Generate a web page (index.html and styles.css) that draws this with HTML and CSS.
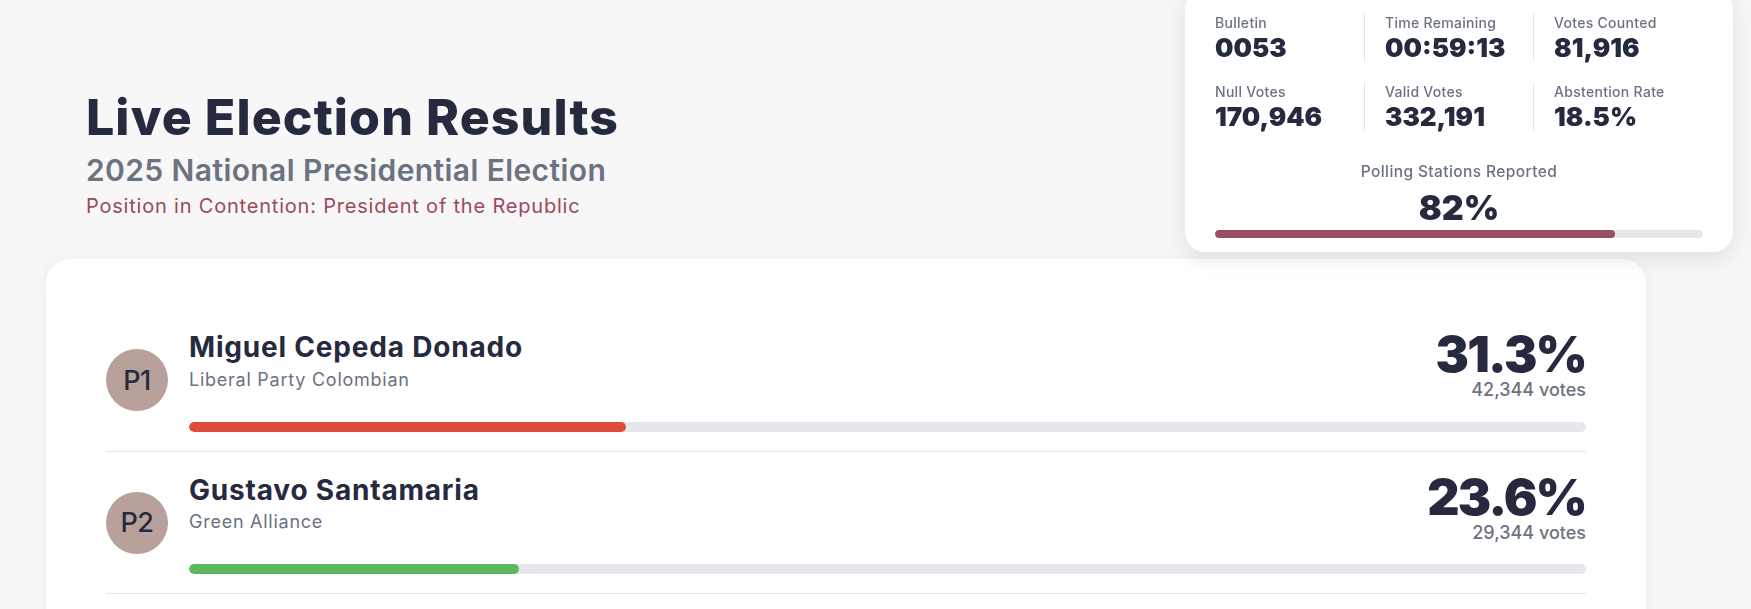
FILE: index.html
```html
<!DOCTYPE html>
<html lang="en">
<head>
<meta charset="utf-8">
<title>Live Election Results</title>
<link rel="stylesheet" href="styles.css">
</head>
<body>
<header class="page-header">
  <h1 class="title">Live Election Results</h1>
  <h2 class="subtitle">2025 National Presidential Election</h2>
  <p class="position">Position in Contention: President of the Republic</p>
</header>

<aside class="stats-card">
  <div class="stats-grid">
    <div class="stat"><div class="stat-label">Bulletin</div><div class="stat-value">0053</div></div>
    <div class="stat stat-sep"><div class="stat-label">Time Remaining</div><div class="stat-value">00:59:13</div></div>
    <div class="stat stat-sep"><div class="stat-label">Votes Counted</div><div class="stat-value">81,916</div></div>
    <div class="stat"><div class="stat-label">Null Votes</div><div class="stat-value">170,946</div></div>
    <div class="stat stat-sep"><div class="stat-label">Valid Votes</div><div class="stat-value">332,191</div></div>
    <div class="stat stat-sep"><div class="stat-label">Abstention Rate</div><div class="stat-value">18.5%</div></div>
  </div>
  <div class="polling">
    <div class="polling-label">Polling Stations Reported</div>
    <div class="polling-value">82%</div>
    <div class="track track-thin"><div class="fill fill-maroon" style="width:82%"></div></div>
  </div>
</aside>

<main class="results-card">
  <div class="candidate">
    <div class="avatar">P1</div>
    <div class="candidate-body">
      <div class="candidate-top">
        <div class="candidate-info">
          <div class="candidate-name">Miguel Cepeda Donado</div>
          <div class="candidate-party">Liberal Party Colombian</div>
        </div>
        <div class="candidate-result">
          <div class="candidate-pct">31.3%</div>
          <div class="candidate-votes">42,344 votes</div>
        </div>
      </div>
      <div class="track"><div class="fill fill-red" style="width:31.3%"></div></div>
    </div>
  </div>
  <div class="candidate">
    <div class="avatar">P2</div>
    <div class="candidate-body">
      <div class="candidate-top">
        <div class="candidate-info">
          <div class="candidate-name">Gustavo Santamaria</div>
          <div class="candidate-party">Green Alliance</div>
        </div>
        <div class="candidate-result">
          <div class="candidate-pct">23.6%</div>
          <div class="candidate-votes">29,344 votes</div>
        </div>
      </div>
      <div class="track"><div class="fill fill-green" style="width:23.6%"></div></div>
    </div>
  </div>
</main>
</body>
</html>
```

FILE: styles.css
```css
* { box-sizing: border-box; }

html, body {
  margin: 0;
  padding: 0;
  background: #f7f7f7;
  font-family: "Inter", "Noto Sans", sans-serif;
  color: #252a3f;
  overflow: hidden;
}

body {
  height: 609px;
}

.page-header {
  padding: 87px 0 0 86px;
  height: 259px;
}

.title {
  margin: 0;
  font-size: 50px;
  line-height: 1.2;
  font-weight: 800;
  color: #252a3f;
  letter-spacing: 1.1px;
}

.subtitle {
  margin: 5px 0 0;
  font-size: 30px;
  line-height: 1.2;
  font-weight: 600;
  color: #6b7280;
  letter-spacing: 0.4px;
}

.position {
  margin: 6px 0 0;
  font-size: 20px;
  line-height: 1.2;
  font-weight: 400;
  color: #9b4a5d;
  letter-spacing: 0.8px;
}

/* floating stats card */
.stats-card {
  position: fixed;
  top: -10px;
  right: 18px;
  width: 548px;
  background: #ffffff;
  border-radius: 20px;
  padding: 23px 30px 14px;
  box-shadow: 0 6px 22px rgba(0, 0, 0, 0.10);
}

.stats-grid {
  display: grid;
  grid-template-columns: 149px 169px 1fr;
  row-gap: 20px;
}

.stat {
  padding-top: 2px;
  height: 49px;
}

.stat-sep {
  border-left: 1px solid #e5e7eb;
  padding-left: 20px;
}

.stat-label {
  font-size: 14px;
  line-height: 16.8px;
  font-weight: 500;
  color: #6b7280;
  letter-spacing: 0.3px;
}

.stat-value {
  margin-top: 1px;
  font-size: 26px;
  line-height: 30px;
  font-weight: 900;
  color: #252a3f;
}

.polling {
  margin-top: 32px;
  text-align: center;
}

.polling-label {
  font-size: 15.5px;
  line-height: 18px;
  font-weight: 500;
  color: #6b7280;
  letter-spacing: 0.4px;
}

.polling-value {
  margin-top: 10px;
  font-size: 34px;
  line-height: 34px;
  font-weight: 900;
  color: #252a3f;
}

.track {
  height: 10px;
  border-radius: 999px;
  background: #e5e7eb;
  overflow: hidden;
}

.track-thin {
  margin-top: 5px;
  height: 8px;
}

.fill {
  height: 100%;
  border-radius: 999px;
}

.fill-maroon { background: #9a4e60; }
.fill-red { background: #df4b3b; }
.fill-green { background: #5cb85c; }

/* results */
.results-card {
  margin-left: 46px;
  width: 1600px;
  background: #ffffff;
  border-radius: 24px;
  padding: 50px 60px;
  box-shadow: 0 2px 14px rgba(0, 0, 0, 0.05);
}

.candidate {
  display: flex;
  align-items: center;
  gap: 21px;
  padding: 20px 0 19px;
  border-bottom: 1px solid #e5e7eb;
}

.avatar {
  flex: 0 0 62px;
  width: 62px;
  height: 62px;
  border-radius: 50%;
  background: #b8a19a;
  color: #252a3f;
  display: flex;
  align-items: center;
  justify-content: center;
  font-size: 27px;
  font-weight: 500;
  letter-spacing: -0.5px;
}

.candidate-body {
  flex: 1;
  min-width: 0;
}

.candidate-top {
  display: flex;
  justify-content: space-between;
  align-items: flex-start;
}

.candidate-info {
  padding-top: 2px;
}

.candidate-name {
  font-size: 28px;
  line-height: 1.2;
  font-weight: 700;
  color: #252a3f;
  letter-spacing: 0.8px;
}

.candidate-party {
  margin-top: 4px;
  font-size: 18px;
  line-height: 1.2;
  font-weight: 400;
  color: #6b7280;
  letter-spacing: 0.75px;
}

.candidate-result {
  text-align: right;
}

.candidate-pct {
  font-size: 50px;
  line-height: 50px;
  font-weight: 900;
  color: #252a3f;
  letter-spacing: -1.8px;
}

.candidate-votes {
  font-size: 18px;
  line-height: 21.6px;
  font-weight: 500;
  color: #6b7280;
}

.candidate-body .track {
  margin-top: 21px;
}
```
